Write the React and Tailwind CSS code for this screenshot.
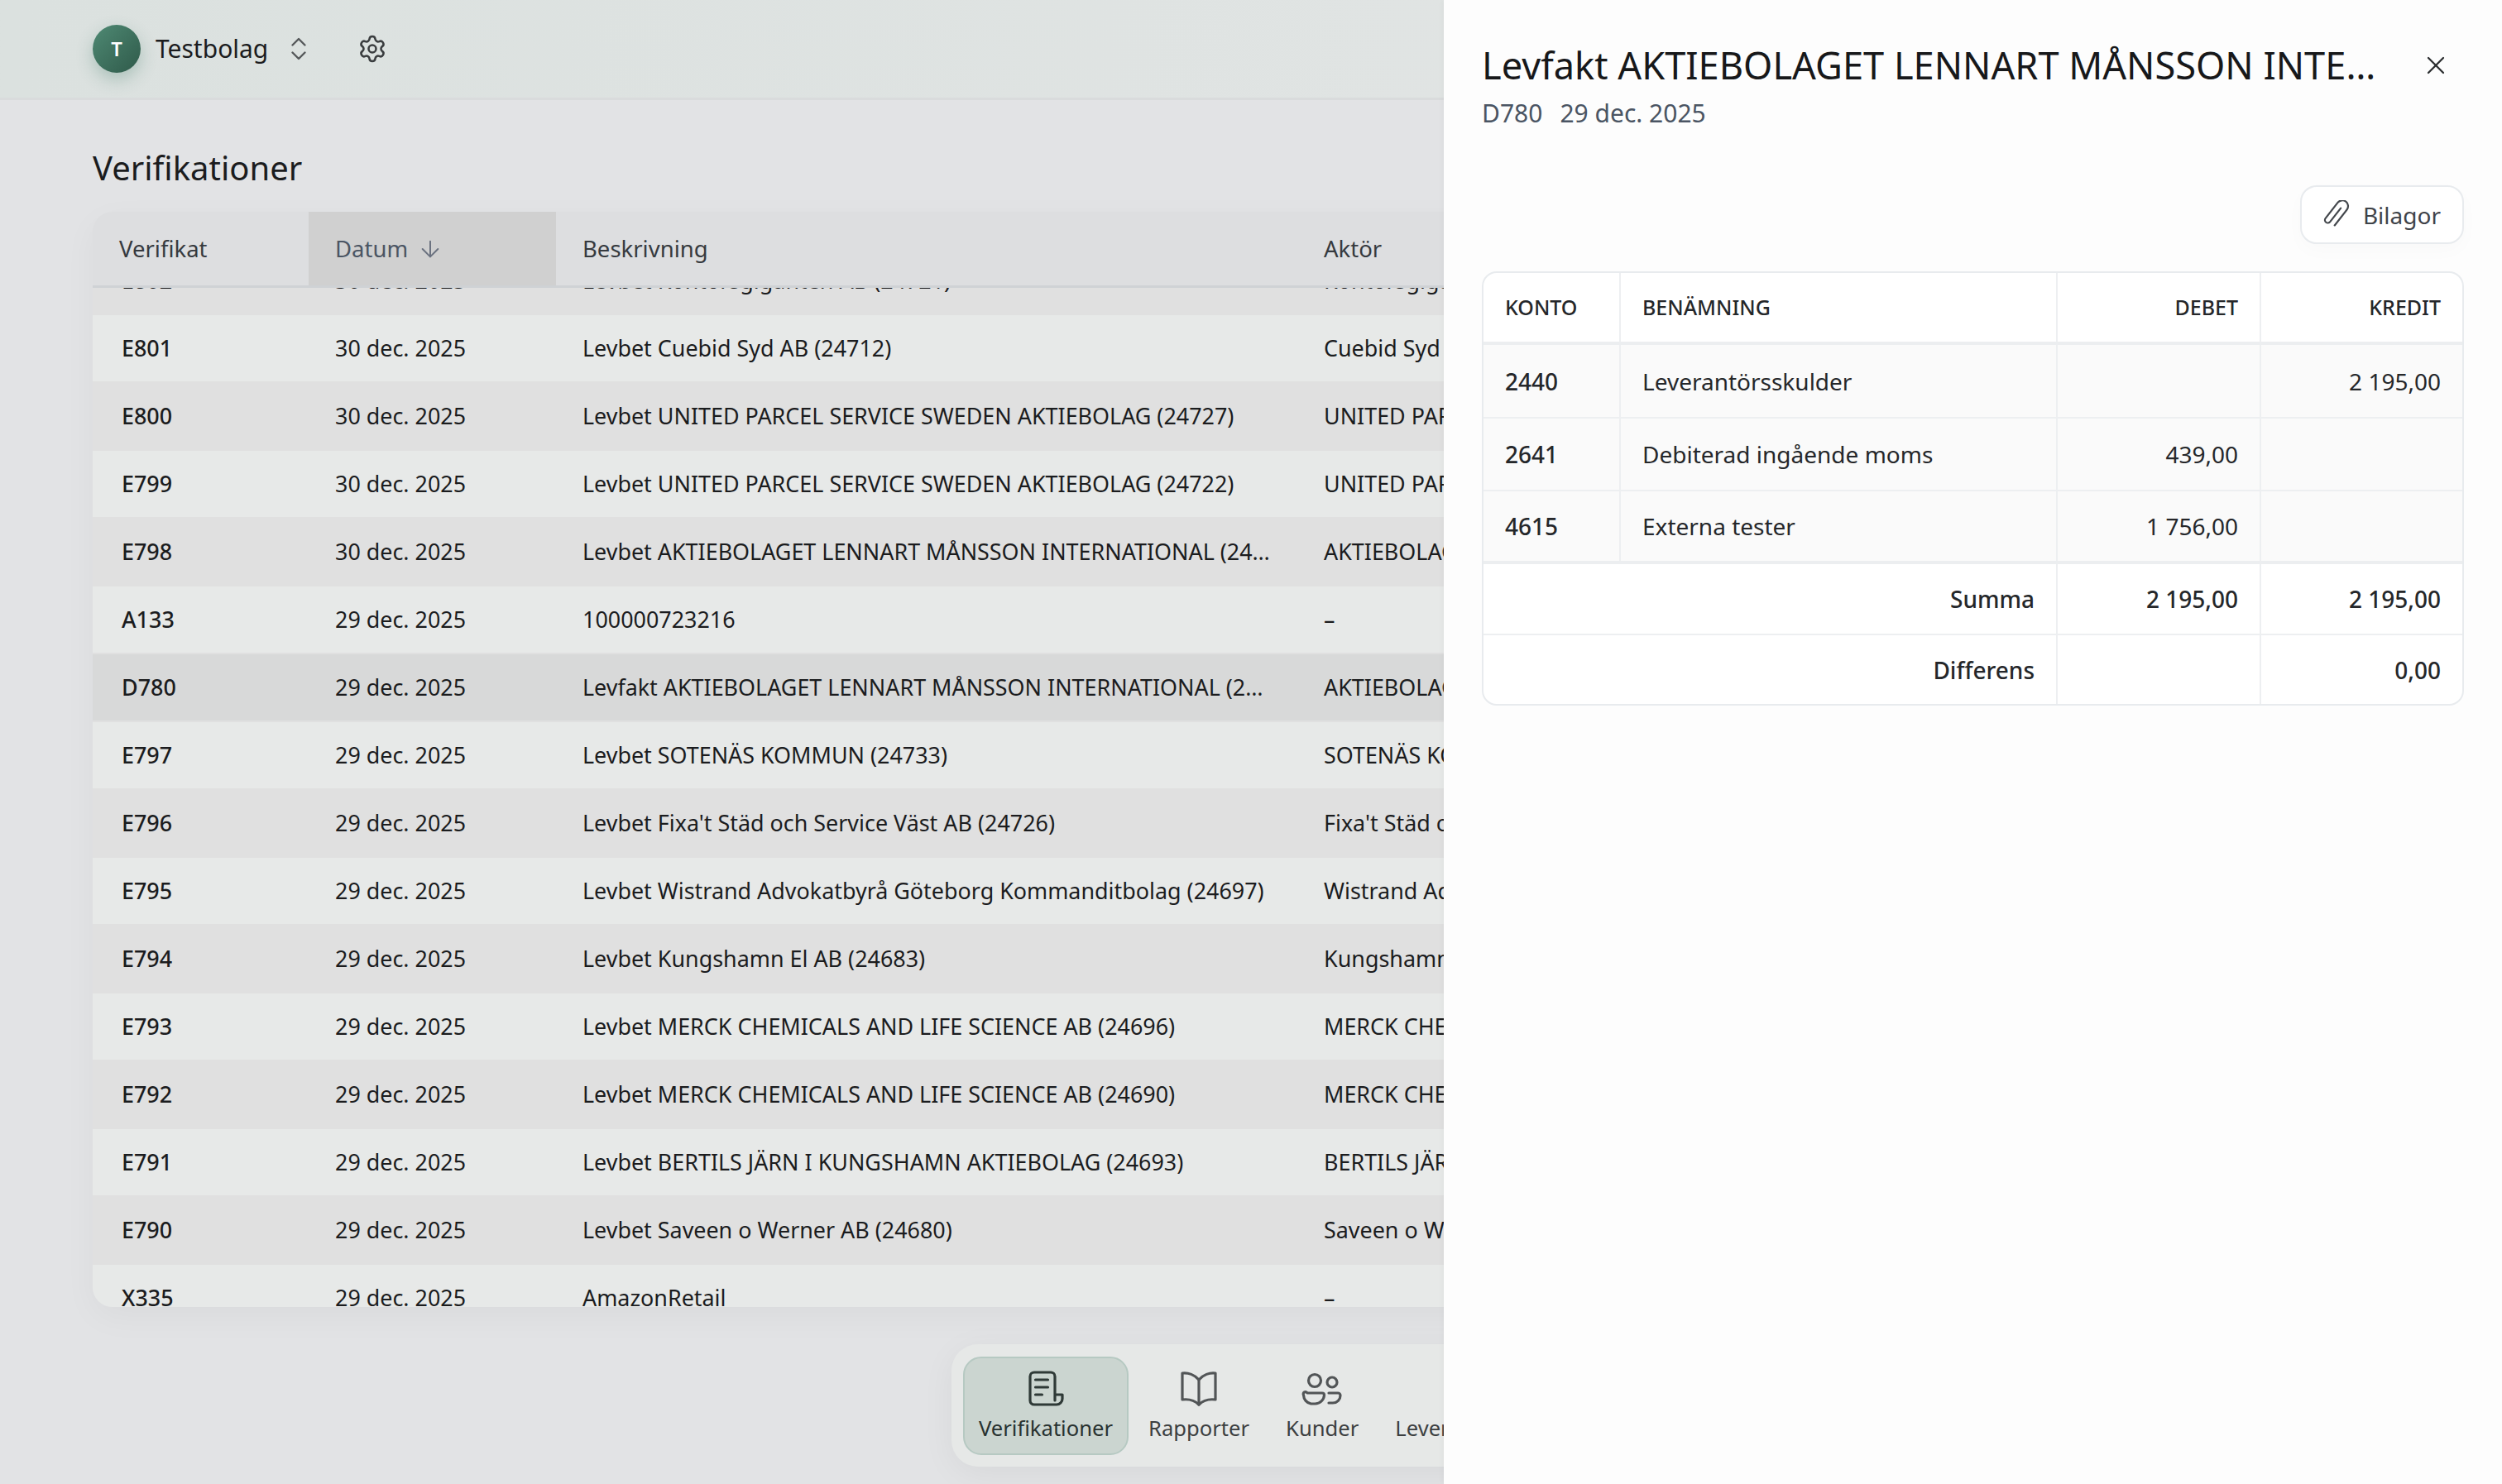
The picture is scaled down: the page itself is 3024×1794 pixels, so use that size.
import { ArrowDown, ChevronsUpDown, Settings, X } from 'lucide-react';

const rows = [
  { id: 'E802', date: '30 dec. 2025', text: 'Levbet Kontorsgiganten AB (24721)', actor: 'Kontorsgiganten AB' },
  { id: 'E801', date: '30 dec. 2025', text: 'Levbet Cuebid Syd AB (24712)', actor: 'Cuebid Syd AB' },
  { id: 'E800', date: '30 dec. 2025', text: 'Levbet UNITED PARCEL SERVICE SWEDEN AKTIEBOLAG (24727)', actor: 'UNITED PARCEL SERVICE' },
  { id: 'E799', date: '30 dec. 2025', text: 'Levbet UNITED PARCEL SERVICE SWEDEN AKTIEBOLAG (24722)', actor: 'UNITED PARCEL SERVICE' },
  { id: 'E798', date: '30 dec. 2025', text: 'Levbet AKTIEBOLAGET LENNART MÅNSSON INTERNATIONAL (24728)', actor: 'AKTIEBOLAGET LENNART' },
  { id: 'A133', date: '29 dec. 2025', text: '100000723216', actor: '–' },
  { id: 'D780', date: '29 dec. 2025', text: 'Levfakt AKTIEBOLAGET LENNART MÅNSSON INTERNATIONAL (24728)', actor: 'AKTIEBOLAGET LENNART', selected: true },
  { id: 'E797', date: '29 dec. 2025', text: 'Levbet SOTENÄS KOMMUN (24733)', actor: 'SOTENÄS KOMMUN' },
  { id: 'E796', date: '29 dec. 2025', text: "Levbet Fixa't Städ och Service Väst AB (24726)", actor: "Fixa't Städ och Service" },
  { id: 'E795', date: '29 dec. 2025', text: 'Levbet Wistrand Advokatbyrå Göteborg Kommanditbolag (24697)', actor: 'Wistrand Advokatbyrå' },
  { id: 'E794', date: '29 dec. 2025', text: 'Levbet Kungshamn El AB (24683)', actor: 'Kungshamn El AB' },
  { id: 'E793', date: '29 dec. 2025', text: 'Levbet MERCK CHEMICALS AND LIFE SCIENCE AB (24696)', actor: 'MERCK CHEMICALS' },
  { id: 'E792', date: '29 dec. 2025', text: 'Levbet MERCK CHEMICALS AND LIFE SCIENCE AB (24690)', actor: 'MERCK CHEMICALS' },
  { id: 'E791', date: '29 dec. 2025', text: 'Levbet BERTILS JÄRN I KUNGSHAMN AKTIEBOLAG (24693)', actor: 'BERTILS JÄRN I' },
  { id: 'E790', date: '29 dec. 2025', text: 'Levbet Saveen o Werner AB (24680)', actor: 'Saveen o Werner AB' },
  { id: 'X335', date: '29 dec. 2025', text: 'AmazonRetail', actor: '–' },
];

const lines = [
  { konto: '2440', name: 'Leverantörsskulder', debet: '', kredit: '2 195,00' },
  { konto: '2641', name: 'Debiterad ingående moms', debet: '439,00', kredit: '' },
  { konto: '4615', name: 'Externa tester', debet: '1 756,00', kredit: '' },
];

const VerifikationerIcon = () => (
  <svg width="48" height="48" viewBox="0 0 48 48" fill="none" stroke="#2f3a37" strokeWidth="3.2" strokeLinecap="round" strokeLinejoin="round">
    <path d="M35 38V9a5 5 0 0 0-5-5H10a5 5 0 0 0-5 5v29a5 5 0 0 0 5 5h27a7 7 0 0 0 7-7v-5h-9" />
    <path d="M11.500 13h15M11.500 22h15M11.500 31h8" />
  </svg>
);

const RapporterIcon = () => (
  <svg width="48" height="48" viewBox="0 0 48 48" fill="none" stroke="#525557" strokeWidth="3.2" strokeLinecap="round" strokeLinejoin="round">
    <path d="M24 13C19 7 11 4 4 5v32c8-1 15 1 20 6 5-5 12-7 20-6V5c-7-1-15 2-20 8z" />
    <path d="M24 13v30" />
  </svg>
);

const KunderIcon = () => (
  <svg width="50" height="48" viewBox="0 0 50 48" fill="none" stroke="#525557" strokeWidth="3.2" strokeLinecap="round" strokeLinejoin="round">
    <circle cx="16" cy="14" r="7.500" />
    <circle cx="37" cy="16" r="6" />
    <path d="M7 29h18a2.500 2.500 0 0 1 2.500 2.500A11 11 0 0 1 16.500 42h-5A11 11 0 0 1 2.500 31.500 2.500 2.500 0 0 1 7 29z" />
    <path d="M33 29h11a3 3 0 0 1 3 3 9 9 0 0 1-9 9h-5" />
  </svg>
);

const ClipIcon = () => (
  <svg width="32" height="36" viewBox="0 -2 32 36" fill="none" stroke="#44484d" strokeWidth="2.200" strokeLinecap="round" strokeLinejoin="round">
    <g transform="rotate(38 16 15)">
      <path d="M15.500 6v21a3.500 3.500 0 0 1-7 0V3a7 7 0 0 1 14 0v24" />
    </g>
  </svg>
);

const Tab = ({ icon, label, active }) => (
  <div
    className={`flex flex-col items-center shrink-0 h-[119px] pt-[13px] rounded-[22px] border-2 ${
      active ? 'px-[17px] bg-[#cbd5d0] border-[#b6c9c2] text-[#283230]' : 'px-[18px] border-transparent text-[#3c3f41]'
    }`}
  >
    <div className="h-[48px]">{icon}</div>
    <span className="mt-[6px] text-[25.6px] leading-[36px]">{label}</span>
  </div>
);

const Cell = ({ children, right, border = true, className = '' }) => (
  <div className={`flex items-center px-[26px] ${right ? 'justify-end' : ''} ${border ? 'border-r-2 border-[#edeff1]' : ''} ${className}`}>
    {children}
  </div>
);

const App = () => {
  return (
    <div className="relative w-[3024px] h-[1794px] overflow-hidden bg-[#e2e3e5] font-['Noto_Sans',sans-serif] text-[#1b1c1e]">
      <header className="flex items-center h-[121px] pl-[112px] border-b-[3px] border-[#d9dbdc] bg-gradient-to-r from-[#dbe1df] to-[#e4e6e6]">
        <div className="flex items-center justify-center w-[58px] h-[58px] rounded-full bg-gradient-to-br from-[#4f8a74] to-[#2f5a4a] text-white text-[24px] font-semibold shadow-[0_8px_20px_rgba(60,120,100,0.3)]">
          T
        </div>
        <span className="ml-[18px] text-[30px] leading-[40px]">Testbolag</span>
        <ChevronsUpDown className="ml-[19px] w-[36px] h-[36px] text-[#55585a]" strokeWidth={1.6} />
        <Settings className="ml-[53px] w-[36px] h-[36px] text-[#3a3d3f]" strokeWidth={1.7} />
      </header>

      <main className="pl-[112px]">
        <h1 className="mt-[54px] text-[40px] leading-[56px] text-[#1b1c1e]">Verifikationer</h1>
        <div className="mt-[25px] w-[2800px] h-[1324px] overflow-hidden rounded-l-[24px] shadow-[0_12px_40px_rgba(0,0,0,0.04)]">
          <div className="relative z-10 flex h-[92px] border-b-[3px] border-[#cfd2d5] bg-[#dddee0] text-[27.5px] text-[#363a3f]">
            <div className="flex items-center w-[261px] pl-[32px] pt-[1px]">Verifikat</div>
            <div className="flex items-center w-[299px] pl-[32px] pt-[1px] bg-[#d0d0d0] text-[#4b5563]">
              Datum
              <ArrowDown className="ml-[11px] w-[32px] h-[32px] text-[#6b7280]" strokeWidth={1.5} />
            </div>
            <div className="flex items-center w-[896px] pl-[32px] pt-[1px]">Beskrivning</div>
            <div className="flex items-center pl-[32px] pt-[1px]">Aktör</div>
          </div>
          <div className="-mt-[49px]">
            {rows.map((row, i) => (
              <div
                key={row.id}
                className={`flex items-center h-[82px] border-b-2 border-[#e0e0e0] text-[26.9px] ${
                  row.selected ? 'bg-[#d8d9d9] border-[#d8d9d9]' : i % 2 === 0 ? 'bg-[#e0e0e0]' : 'bg-[#e7e9e8]'
                }`}
              >
                <div className="w-[261px] pl-[35px] font-medium">{row.id}</div>
                <div className="w-[299px] pl-[32px]">{row.date}</div>
                <div className="w-[896px] pl-[32px] pr-[32px] truncate">{row.text}</div>
                <div className="pl-[32px] whitespace-nowrap">{row.actor}</div>
              </div>
            ))}
          </div>
        </div>
      </main>

      <nav className="absolute z-20 left-[1150px] bottom-[21px] flex gap-[4px] w-[800px] h-[148px] px-[14px] items-center rounded-[32px] bg-[#e6e8e7] shadow-[0_8px_40px_rgba(0,0,0,0.05)]">
        <Tab active icon={<VerifikationerIcon />} label="Verifikationer" />
        <Tab icon={<RapporterIcon />} label="Rapporter" />
        <Tab icon={<KunderIcon />} label="Kunder" />
        <Tab label="Leverantörer" />
      </nav>

      <aside className="absolute z-30 top-0 right-0 flex flex-col w-[1279px] h-full pl-[46px] pr-[46px] bg-[#fdfdfd] shadow-[-2px_0_6px_rgba(0,0,0,0.03)]">
        <div className="flex items-center justify-between mt-[48px]">
          <h2 className="w-[1090px] truncate text-[45.2px] leading-[62px] text-[#17181a]">
            Levfakt AKTIEBOLAGET LENNART MÅNSSON INTERNATIONAL (24728)
          </h2>
          <X className="mr-[16px] w-[36px] h-[36px] text-[#2b2d2f]" strokeWidth={1.5} />
        </div>
        <div className="flex gap-[21px] mt-[7px] text-[30px] leading-[40px] text-[#4b5563]">
          <span>D780</span>
          <span>29 dec. 2025</span>
        </div>
        <div className="flex justify-end mt-[67px]">
          <button className="flex items-center gap-[16px] h-[71px] pl-[26px] pr-[26px] rounded-[20px] border-2 border-[#e8ebee] bg-white text-[28px] text-[#3f4349] shadow-[0_8px_24px_rgba(0,0,0,0.02)]">
            <ClipIcon />
            Bilagor
          </button>
        </div>
        <div className="mt-[33px] rounded-[18px] border-2 border-[#e8ebee] overflow-hidden bg-white">
          <div className="grid grid-cols-[166px_528px_246px_1fr] h-[87px] border-b-4 border-[#eceef0] text-[25px] font-medium text-[#25272a]">
            <Cell>KONTO</Cell>
            <Cell>BENÄMNING</Cell>
            <Cell right>DEBET</Cell>
            <Cell right border={false}>KREDIT</Cell>
          </div>
          {lines.map((line, i) => (
            <div
              key={line.konto}
              className={`grid grid-cols-[166px_528px_246px_1fr] bg-[#fafafa] text-[28px] text-[#25272a] ${
                i === 0 ? 'h-[89px]' : 'h-[88px]'
              } ${i === 2 ? 'border-b-4 border-[#eceef0]' : 'border-b-2 border-[#edeff1]'}`}
            >
              <Cell className="font-medium">{line.konto}</Cell>
              <Cell>{line.name}</Cell>
              <Cell right>{line.debet}</Cell>
              <Cell right border={false}>{line.kredit}</Cell>
            </div>
          ))}
          <div className="grid grid-cols-[694px_246px_1fr] h-[86px] border-b-2 border-[#edeff1] text-[28px] font-medium text-[#25272a]">
            <Cell right>Summa</Cell>
            <Cell right>2 195,00</Cell>
            <Cell right border={false}>2 195,00</Cell>
          </div>
          <div className="grid grid-cols-[694px_246px_1fr] h-[83px] text-[28px] text-[#25272a]">
            <Cell right className="font-medium">Differens</Cell>
            <Cell right></Cell>
            <Cell right border={false} className="font-medium">0,00</Cell>
          </div>
        </div>
      </aside>
    </div>
  );
};

export default App;
